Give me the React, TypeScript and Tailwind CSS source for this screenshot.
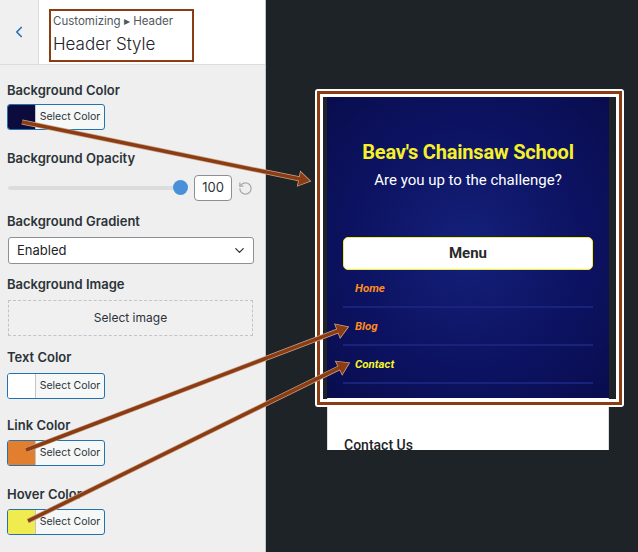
import React from 'react';
import { ChevronLeft, ChevronDown, RotateCcw } from 'lucide-react';

const ui = { fontFamily: 'Inter, "Liberation Sans", Arial, sans-serif' };
const site = { fontFamily: 'Roboto, "DejaVu Sans", sans-serif' };

const ColorButton: React.FC<{ swatch: string }> = ({ swatch }) => (
  <div className="flex h-[26px] w-[98px] overflow-hidden rounded-[3px] border border-[#2271b1] bg-[#f6f7f7]">
    <div className="w-[28px] border-r border-[#c3c4c7]" style={{ background: swatch }} />
    <div className="flex flex-1 items-center justify-center text-[10.5px] text-[#2c3338]">Select Color</div>
  </div>
);

const Label: React.FC<{ children: React.ReactNode; className?: string }> = ({ children, className }) => (
  <div className={`h-[16px] text-[13px] leading-[16px] font-semibold text-[#2c3338] ${className ?? ''}`}>{children}</div>
);

type Pt = [number, number];

const Arrow: React.FC<{ from: Pt; to: Pt }> = ({ from, to }) => {
  const dx = to[0] - from[0];
  const dy = to[1] - from[1];
  const len = Math.hypot(dx, dy);
  const ux = dx / len;
  const uy = dy / len;
  const bx = to[0] - ux * 11;
  const by = to[1] - uy * 11;
  const px = -uy * 7;
  const py = ux * 7;
  const head = `${to[0]},${to[1]} ${bx + px},${by + py} ${bx - px},${by - py}`;
  return (
    <g>
      <line x1={from[0]} y1={from[1]} x2={bx + ux} y2={by + uy} stroke="#c9a58d" strokeWidth={5} />
      <polygon points={head} fill="#c9a58d" stroke="#c9a58d" strokeWidth={1.5} />
      <line x1={from[0]} y1={from[1]} x2={bx + ux} y2={by + uy} stroke="#8b3c12" strokeWidth={3.5} />
      <polygon points={head} fill="#8b3c12" />
    </g>
  );
};

const NavItem: React.FC<{ label: string; color: string }> = ({ label, color }) => (
  <div className="flex h-[38px] items-center border-b-2 border-[#19237e] pl-[12px] pt-[2px]">
    <span className="text-[11.5px] font-bold italic" style={{ color }}>{label}</span>
  </div>
);

export default function App() {
  return (
    <div className="relative flex h-[552px] w-[638px] overflow-hidden bg-[#1d2327]" style={ui}>
      {/* customizer panel */}
      <div className="flex w-[266px] flex-col border-r border-[#c3c4c7] bg-[#efefef]">
        <div className="flex h-[65px] border-b border-[#dcdcde]">
          <div className="flex w-[38px] items-center justify-center bg-[#f0f0f1]">
            <ChevronLeft className="h-[18px] w-[18px] text-[#2271b1]" strokeWidth={2.2} />
          </div>
          <div className="flex-1 border-l border-[#dcdcde] bg-white pl-[10px] pt-[9px]">
            <div className="h-[53px] w-[145px] border-2 border-[#8b3c12] pl-[2px] pt-[1px]">
              <div className="text-[11.5px] leading-[18px] text-[#50575e]">Customizing ▸ Header</div>
              <div className="mt-[3px] text-[17px] leading-[22px] font-light text-[#1d2327]">Header Style</div>
            </div>
          </div>
        </div>

        <div className="flex flex-col pl-[7px]">
          <Label className="mt-[17px]">Background Color</Label>
          <div className="mt-[6px]"><ColorButton swatch="#0b0c3d" /></div>

          <Label className="mt-[20px]">Background Opacity</Label>
          <div className="mt-[9px] flex h-[26px] items-center">
            <div className="relative ml-[1px] h-[4px] w-[172px] rounded bg-[#dcdcde]">
              <div className="absolute -top-[6px] right-[-8px] h-[15px] w-[15px] rounded-full bg-[#4a90d9]" />
            </div>
            <div className="ml-[14px] flex h-[26px] w-[38px] items-center justify-center rounded-[4px] border border-[#8c8f94] bg-white text-[13px] text-[#2c3338]">100</div>
            <RotateCcw className="ml-[6px] h-[15px] w-[15px] text-[#a7aaad]" strokeWidth={2} />
          </div>

          <Label className="mt-[12px]">Background Gradient</Label>
          <div className="ml-[1px] mt-[8px] flex h-[27px] w-[246px] items-center justify-between rounded-[3px] border border-[#8c8f94] bg-white pl-[8px] pr-[6px]">
            <span className="text-[13px] text-[#1d2327]">Enabled</span>
            <ChevronDown className="h-[15px] w-[15px] text-[#2c3338]" strokeWidth={2} />
          </div>

          <Label className="mt-[12px]">Background Image</Label>
          <div className="ml-[1px] mt-[8px] flex h-[36px] w-[245px] items-center justify-center border border-dashed border-[#c3c4c7] bg-[#f0f0f1] text-[12px] text-[#2c3338]">Select image</div>

          <Label className="mt-[13px]">Text Color</Label>
          <div className="mt-[8px]"><ColorButton swatch="#ffffff" /></div>

          <Label className="mt-[18px]">Link Color</Label>
          <div className="mt-[7px]"><ColorButton swatch="#e17f2f" /></div>

          <Label className="mt-[20px]">Hover Color</Label>
          <div className="mt-[7px]"><ColorButton swatch="#f0ec50" /></div>
        </div>
      </div>

      {/* site preview */}
      <div className="flex-1 pl-[61px] pt-[96px]" style={site}>
        <div className="w-[282px]">
          <div className="flex h-[302px] flex-col bg-[radial-gradient(ellipse_at_center,#14207a_0%,#0c1260_60%,#090d4e_100%)] px-[16px]">
            <div className="mt-[43px] whitespace-nowrap text-center text-[20px] leading-[26px] font-bold tracking-[-0.2px] text-[#f5f02a]">Beav's Chainsaw School</div>
            <div className="mt-[5px] whitespace-nowrap text-center text-[15px] leading-[20px] text-white">Are you up to the challenge?</div>
            <div className="mt-[47px] flex h-[33px] items-center justify-center rounded-[5px] border border-[#f5f02a] bg-white text-[15px] font-bold text-[#2a2a2a]">Menu</div>
            <NavItem label="Home" color="#ff8c1a" />
            <NavItem label="Blog" color="#ff8c1a" />
            <NavItem label="Contact" color="#f5f52a" />
          </div>
          <div className="h-[52px] border-x border-[#dcdcde] bg-white pl-[16px] pt-[39px]">
            <div className="text-[14px] leading-[16px] font-medium text-[#1d2327]">Contact Us</div>
          </div>
        </div>
      </div>

      {/* annotation frame around the header preview */}
      <div className="absolute left-[315px] top-[89px] h-[318px] w-[309px] rounded-[3px] border-2 border-white">
        <div className="h-full w-full border-[3px] border-[#8b3c12]">
          <div className="h-full w-full border-[3px] border-white" />
        </div>
      </div>

      <svg className="pointer-events-none absolute left-0 top-0" width={638} height={552}>
        <Arrow from={[22, 122]} to={[310, 181]} />
        <Arrow from={[26, 450]} to={[348, 327]} />
        <Arrow from={[28, 521]} to={[349, 363]} />
      </svg>
    </div>
  );
}
